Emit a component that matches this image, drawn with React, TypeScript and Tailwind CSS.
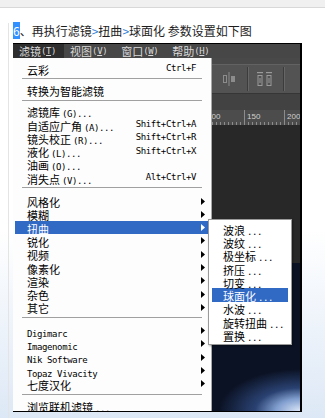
import React from "react";

type Entry = { t: string; k?: string; sub?: boolean; on?: boolean } | { sep: number };

const menu: Entry[] = [
    { t: "云彩", k: "Ctrl+F" },
    { sep: 8 },
    { t: "转换为智能滤镜" },
    { sep: 8 },
    { t: "滤镜库(G)..." },
    { t: "自适应广角(A)...", k: "Shift+Ctrl+A" },
    { t: "镜头校正(R)...", k: "Shift+Ctrl+R" },
    { t: "液化(L)...", k: "Shift+Ctrl+X" },
    { t: "油画(O)..." },
    { t: "消失点(V)...", k: "Alt+Ctrl+V" },
    { sep: 10 },
    { t: "风格化", sub: true },
    { t: "模糊", sub: true },
    { t: "扭曲", sub: true, on: true },
    { t: "锐化", sub: true },
    { t: "视频", sub: true },
    { t: "像素化", sub: true },
    { t: "渲染", sub: true },
    { t: "杂色", sub: true },
    { t: "其它", sub: true },
    { sep: 10 },
    { t: "Digimarc", sub: true },
    { t: "Imagenomic", sub: true },
    { t: "Nik Software", sub: true },
    { t: "Topaz Vivacity", sub: true },
    { t: "七度汉化", sub: true },
    { sep: 9 },
    { t: "浏览联机滤镜..." },
];

const distort = ["波浪...", "波纹...", "极坐标...", "挤压...", "切变...", "球面化...", "水波...", "旋转扭曲...", "置换..."];

// split CJK runs from latin runs: latin is drawn in a narrow mono like the old SimSun menus
function Txt({ s }: { s: string }) {
    const parts = s.split(/([\u3000-\u303f\u4e00-\u9fff\uff00-\uffef]+)/).filter(Boolean);
    return (
        <span className="leading-none whitespace-pre">
            {parts.map((p, i) =>
                /[\u3000-\u9fff\uff00-\uffef]/.test(p) ? (
                    <span key={i} className="font-['Noto_Sans_CJK_SC',sans-serif] text-[11px]">{p}</span>
                ) : (
                    <span
                        key={i}
                        className={`font-['DejaVu_Sans_Mono',monospace] text-[9px] tracking-[-0.4px] ${i > 0 ? "ml-[2px]" : ""}`}
                    >
                        {p}
                    </span>
                )
            )}
        </span>
    );
}

function Arrow({ white }: { white?: boolean }) {
    return (
        <svg width="4" height="7" viewBox="0 0 4 7" className="ml-auto shrink-0">
            <polygon points="0,0 4,3.5 0,7" fill={white ? "#ffffff" : "#000000"} />
        </svg>
    );
}

function MenuTitle({ label, key_, on }: { label: string; key_: string; on?: boolean }) {
    return (
        <div className={`h-full flex items-center leading-none pl-[6px] pr-[8px] ${on ? "bg-[#2e2e2e]" : ""}`}>
            <span className="font-['Noto_Sans_CJK_SC',sans-serif] text-[11px]">{label}</span>
            <span className="font-['DejaVu_Sans_Mono',monospace] text-[9px] tracking-[-0.4px]">
                (<span className="underline">{key_}</span>)
            </span>
        </div>
    );
}

function Toolbar() {
    return (
        <div className="h-[28px] bg-[#535353] flex items-center pl-[210px]">
            <svg width="12" height="14" viewBox="0 0 12 14" className="shrink-0">
                <rect x="0.5" y="3.5" width="3" height="7" fill="none" stroke="#8c8c8c" />
                <rect x="5.5" y="0" width="1" height="14" fill="#8c8c8c" />
                <rect x="8" y="4" width="4" height="6" fill="#8c8c8c" />
            </svg>
            <div className="ml-[12px] w-[2px] h-[24px] border-l border-[#3c3c3c] bg-[#666666] shrink-0" />
            <svg width="15" height="14" viewBox="0 0 15 14" className="ml-[8px] shrink-0">
                <rect x="0" y="0" width="6" height="1.2" fill="#9a9a9a" />
                <rect x="9" y="0" width="6" height="1.2" fill="#9a9a9a" />
                <rect x="1" y="3.5" width="4" height="10" fill="none" stroke="#9a9a9a" />
                <rect x="10" y="3.5" width="4" height="10" fill="none" stroke="#9a9a9a" />
                <rect x="2.5" y="6" width="1" height="5" fill="#9a9a9a" />
                <rect x="11.5" y="6" width="1" height="5" fill="#9a9a9a" />
            </svg>
            <div className="ml-[11px] w-[2px] h-[24px] border-l border-[#3c3c3c] bg-[#666666] shrink-0" />
        </div>
    );
}

function Ruler() {
    return (
        <div className="h-[15px] bg-[#4c4c4c] flex overflow-hidden">
            <div className="w-[191px] shrink-0" />
            {["100", "150", "200"].map((n) => (
                <div key={n} className="w-[40px] shrink-0 border-l border-[#8c8c8c] flex flex-col justify-between">
                    <span className="pl-[2px] pt-[2px] font-['Liberation_Sans',sans-serif] text-[8px] leading-[9px] text-[#d0d0d0]">{n}</span>
                    <div className="flex h-[3px]">
                        {Array.from({ length: 9 }).map((_, i) => (
                            <div key={i} className="w-[4px] shrink-0 border-r border-[#8c8c8c]" />
                        ))}
                    </div>
                </div>
            ))}
        </div>
    );
}

export default function App() {
    return (
        <div className="w-[325px] h-[418px] overflow-hidden bg-[linear-gradient(180deg,#ffffff_55%,#dde8f6)]">
            <div className="h-[8px] bg-[#f0f0f0] border-b border-[#d8d8d8]" />
            <div className="ml-[8px] border-l border-[#e4e4e4] pl-[4px] h-[410px]">
                <p className="mt-[15px] h-[16px] leading-[16px] whitespace-pre font-['Noto_Sans_CJK_SC',sans-serif] text-[12px] text-[#1d1d1d]">
                    <span className="bg-[#3390ff] text-white">6</span>、再执行滤镜
                    <span className="text-[#2f7fd8]">&gt;</span>扭曲
                    <span className="text-[#2f7fd8]">&gt;</span>球面化 参数设置如下图
                </p>

                <div className="mt-[4px] w-[289px] h-[369px] border-t border-r-2 border-b border-black flex flex-col overflow-hidden">
                    {/* photoshop menubar */}
                    <div className="h-[14px] shrink-0 bg-[#474747] text-[#d8d8d8] flex">
                        <MenuTitle label="滤镜" key_="T" on />
                        <MenuTitle label="视图" key_="V" />
                        <MenuTitle label="窗口" key_="W" />
                        <MenuTitle label="帮助" key_="H" />
                    </div>

                    <div className="relative flex-1 flex flex-col">
                        {/* workspace behind the menu */}
                        <div className="h-[6px] bg-[#494949]" />
                        <div className="h-px bg-[#626262]" />
                        <Toolbar />
                        <div className="h-px bg-[#363636]" />
                        <div className="h-[16px] bg-[#424242]" />
                        <Ruler />
                        <div className="h-[138px] bg-[#282828]" />
                        <div className="flex-1 bg-[radial-gradient(ellipse_at_bottom_right,#dbe6f7_0%,#7e9ccd_6%,#2a4272_11%,#0b1224_20%)]" />

                        {/* filter menu */}
                        <div className="absolute left-0 top-0 bottom-0 w-[199px] bg-[#fdfdfd] border-r border-[#a8a8a8] pt-[4px] leading-none">
                            {menu.map((e, i) =>
                                "sep" in e ? (
                                    <div key={i} style={{ height: e.sep }} className="px-[9px] pt-[3px]">
                                        <div className="h-px bg-[#a0a0a0]" />
                                    </div>
                                ) : (
                                    <div
                                        key={i}
                                        className={`h-[13.3px] mx-[2px] pl-[12px] pr-[4px] flex items-center leading-none ${e.on ? "bg-[#316ac5] text-white" : "text-black"}`}
                                    >
                                        <Txt s={e.t} />
                                        {e.k && (
                                            <span className="ml-auto mr-[9px] font-['DejaVu_Sans_Mono',monospace] text-[9px] tracking-[-0.4px] leading-none">
                                                {e.k}
                                            </span>
                                        )}
                                        {e.sub && <Arrow white={e.on} />}
                                    </div>
                                )
                            )}
                        </div>

                        {/* distort submenu */}
                        <div className="absolute left-[195px] top-[161px] w-[84px] bg-white border border-[#9a9a9a] pt-[2px] pb-[2px] leading-none shadow-[1px_1px_2px_rgba(0,0,0,0.35)]">
                            {distort.map((t, i) => (
                                <div
                                    key={t}
                                    className={`h-[13.3px] mx-[3px] pl-[11px] flex items-center leading-none ${i === 5 ? "bg-[#316ac5] text-white" : "text-black"}`}
                                >
                                    <Txt s={t} />
                                </div>
                            ))}
                        </div>
                    </div>
                </div>
            </div>
        </div>
    );
}
